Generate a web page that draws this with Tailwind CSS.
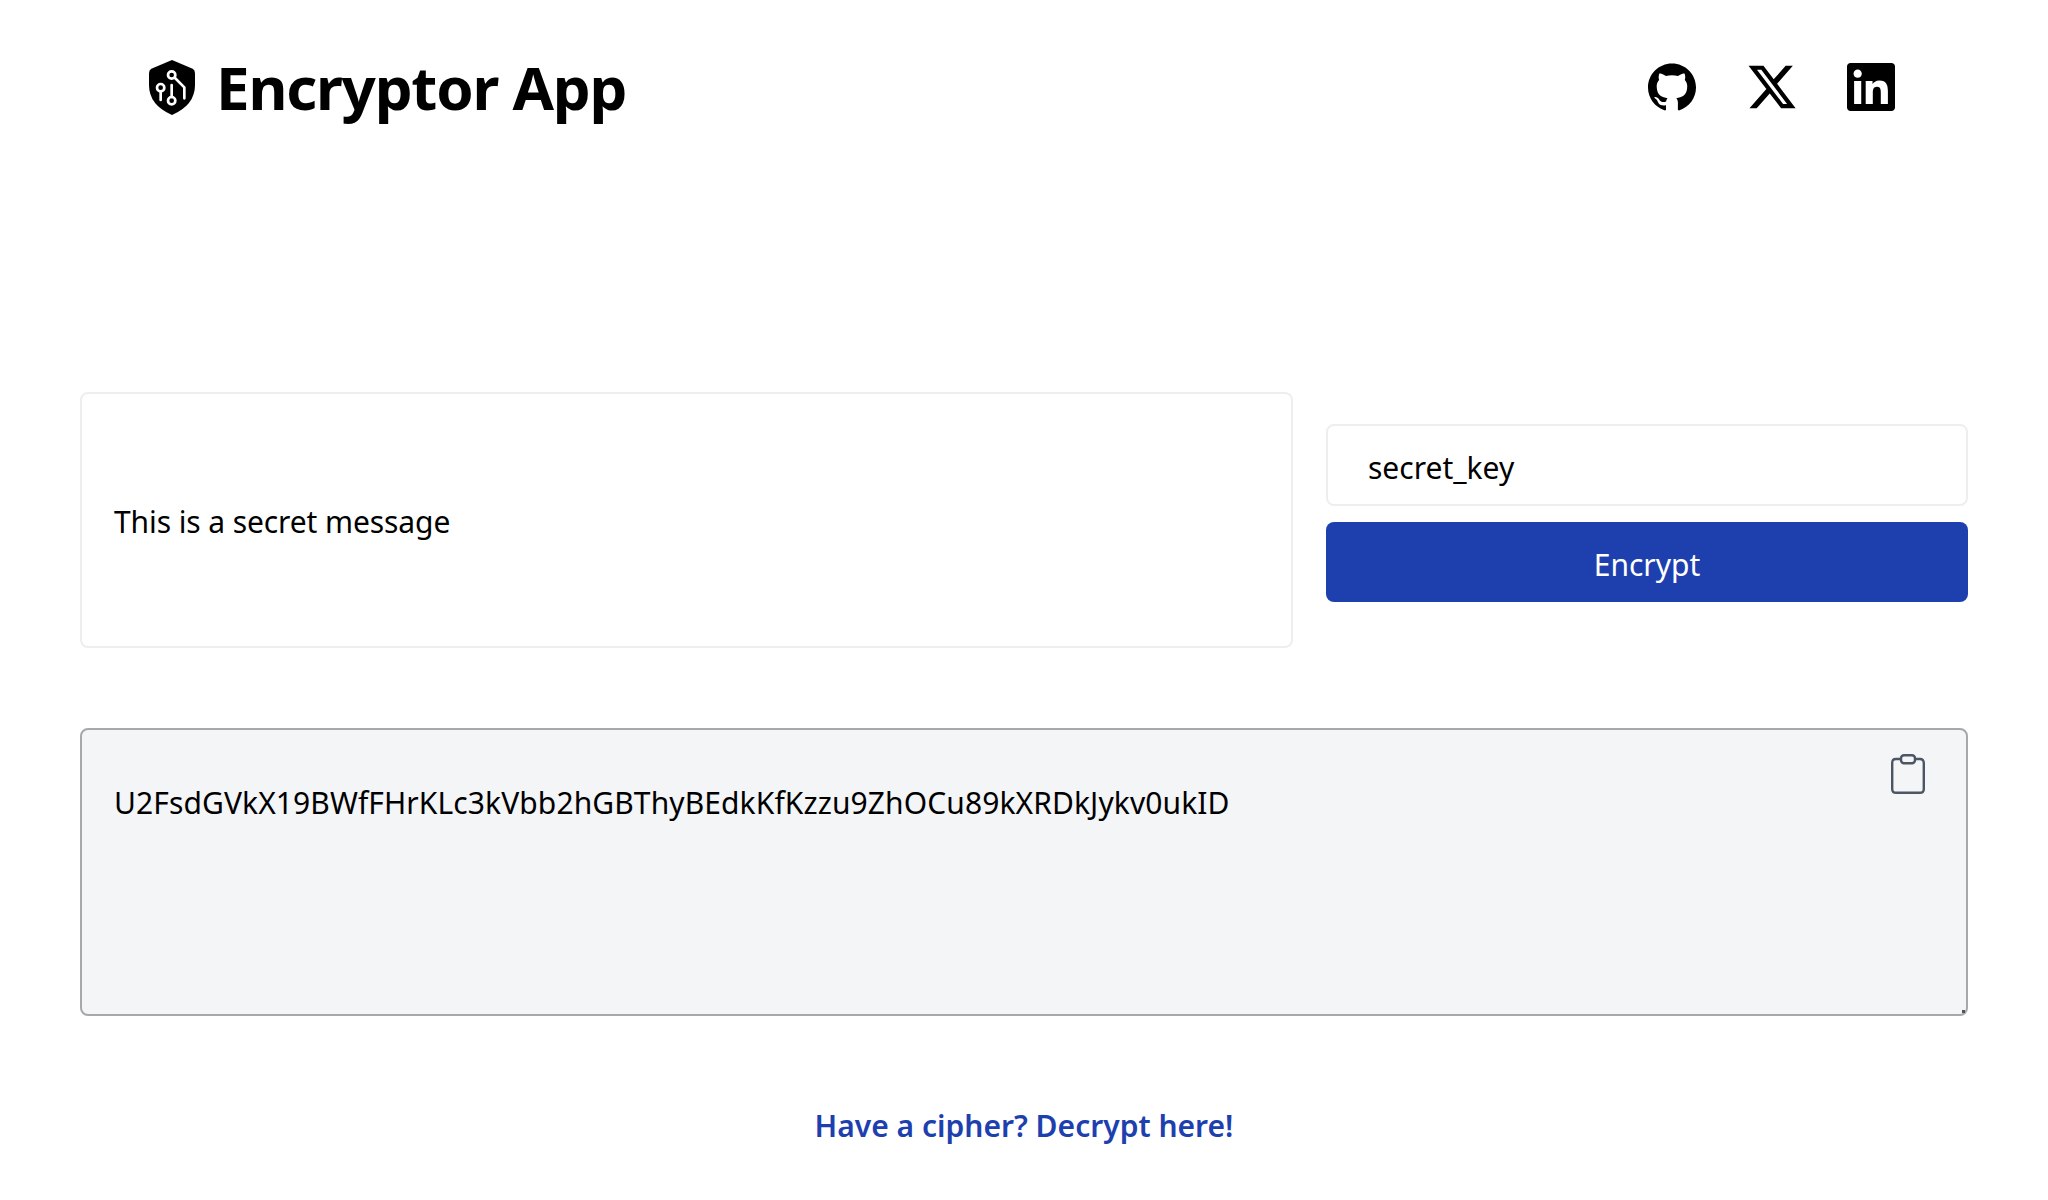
<!DOCTYPE html>
<html lang="en">
<head>
    <meta charset="UTF-8">
    <meta name="viewport" content="width=device-width, initial-scale=1.0">
    <title>Encryptor App</title>
    <script src="https://cdn.jsdelivr.net/npm/@tailwindcss/browser@4"></script>
</head>
<body class="min-h-screen bg-white text-black font-['Noto_Sans',sans-serif]">
    <!-- Header -->
    <header class="flex items-center justify-between h-[174px] pl-[149px] pr-[153px]">
        <div class="flex items-center gap-[21px]">
            <svg class="w-[46px] h-[55px]" viewBox="27 30 138 165" aria-hidden="true">
                <path d="M96 30 L158 56 Q165 60 165 70 L165 105 Q165 165 96 195 Q27 165 27 105 L27 70 Q27 60 34 56 Z" fill="#000"/>
                <g fill="none" stroke="#fff" stroke-width="8" stroke-linecap="round" stroke-linejoin="round">
                    <circle cx="95" cy="75" r="11"/>
                    <path d="M105 84 L133 112 L133 145"/>
                    <circle cx="62" cy="113" r="11"/>
                    <path d="M62 124 L62 150"/>
                    <circle cx="95" cy="152" r="11"/>
                    <path d="M95 141 L95 105"/>
                </g>
            </svg>
            <h1 class="text-[60px] leading-none font-bold tracking-[-1.2px]">Encryptor App</h1>
        </div>
        <nav class="flex items-center gap-[51px]">
            <svg class="w-[48px] h-[48px] mr-[1px]" viewBox="0 0 24 24" fill="#000"><path d="M12 .297c-6.63 0-12 5.373-12 12 0 5.303 3.438 9.8 8.205 11.385.6.113.82-.258.82-.577 0-.285-.01-1.04-.015-2.04-3.338.724-4.042-1.61-4.042-1.61C4.422 18.07 3.633 17.7 3.633 17.7c-1.087-.744.084-.729.084-.729 1.205.084 1.838 1.236 1.838 1.236 1.07 1.835 2.809 1.305 3.495.998.108-.776.417-1.305.76-1.605-2.665-.3-5.466-1.332-5.466-5.93 0-1.31.465-2.38 1.235-3.22-.135-.303-.54-1.523.105-3.176 0 0 1.005-.322 3.3 1.23.96-.267 1.98-.399 3-.405 1.02.006 2.04.138 3 .405 2.28-1.552 3.285-1.23 3.285-1.23.645 1.653.24 2.873.12 3.176.765.84 1.23 1.91 1.23 3.22 0 4.61-2.805 5.625-5.475 5.92.42.36.81 1.096.81 2.22 0 1.606-.015 2.896-.015 3.286 0 .315.21.69.825.57C20.565 22.092 24 17.592 24 12.297c0-6.627-5.373-12-12-12"/></svg>
            <svg class="w-[48px] h-[48px]" viewBox="1 1 22 22" fill="#000"><path d="M18.244 2.25h3.308l-7.227 8.26 8.502 11.24H16.17l-5.214-6.817L4.99 21.75H1.68l7.73-8.835L1.254 2.25H8.08l4.713 6.231zm-1.161 17.52h1.833L7.084 4.126H5.117z"/></svg>
            <svg class="w-[48px] h-[48px]" viewBox="0 0 24 24" fill="#000"><path d="M20.447 20.452h-3.554v-5.569c0-1.328-.027-3.037-1.852-3.037-1.853 0-2.136 1.445-2.136 2.939v5.667H9.351V9h3.414v1.561h.046c.477-.9 1.637-1.85 3.37-1.85 3.601 0 4.267 2.37 4.267 5.455v6.286zM5.337 7.433c-1.144 0-2.063-.926-2.063-2.065 0-1.138.92-2.063 2.063-2.063 1.14 0 2.064.925 2.064 2.063 0 1.139-.925 2.065-2.064 2.065zm1.782 13.019H3.555V9h3.564v11.452zM22.225 0H1.771C.792 0 0 .774 0 1.729v20.542C0 23.227.792 24 1.771 24h20.451C23.2 24 24 23.227 24 22.271V1.729C24 .774 23.2 0 22.222 0h.003z"/></svg>
        </nav>
    </header>

    <main class="px-[80px] pt-[218px]">
        <!-- Input row -->
        <div class="flex items-center gap-[33px]">
            <div class="flex items-center w-[1213px] h-[256px] px-[32px] pt-[2px] border-2 border-[#eeeeee] rounded-lg text-[30px] tracking-[-0.1px]">This is a secret message</div>
            <div class="flex flex-col gap-[16px] w-[642px] pb-[15px]">
                <input type="text" value="secret_key" class="w-full h-[82px] px-[40px] pt-[6px] border-2 border-[#eeeeee] rounded-lg text-[30px]">
                <button class="w-full h-[80px] pt-[5px] bg-[#1e40af] text-white rounded-lg text-[30px]">Encrypt</button>
            </div>
        </div>

        <!-- Output -->
        <div class="relative mt-[80px]">
            <textarea readonly class="block w-full h-[288px] px-[32px] py-[49px] bg-[#f4f5f7] border-2 border-[#a8a8a8] rounded-lg text-[30px] leading-[48px] tracking-[0.1px] resize-none">U2FsdGVkX19BWfFHrKLc3kVbb2hGBThyBEdkKfKzzu9ZhOCu89kXRDkJykv0ukID</textarea>
            <span class="absolute right-[3px] bottom-[3px] w-[3px] h-[3px] bg-gray-600"></span>
            <svg class="absolute top-[26px] right-[43px] w-[34px] h-[40px]" viewBox="0 0 34 40" fill="none" stroke="#4b5563" stroke-width="2.4" stroke-linecap="round" stroke-linejoin="round">
                <rect x="10" y="1.2" width="14" height="8" rx="3"/>
                <path d="M10 5H5Q1.2 5 1.2 9V35Q1.2 38.8 5 38.8H29Q32.8 38.8 32.8 35V9Q32.8 5 29 5H24"/>
            </svg>
        </div>

        <p class="mt-[87px] text-center text-[30px] font-semibold text-[#1e40af]">Have a cipher? Decrypt here!</p>
    </main>
</body>
</html>
